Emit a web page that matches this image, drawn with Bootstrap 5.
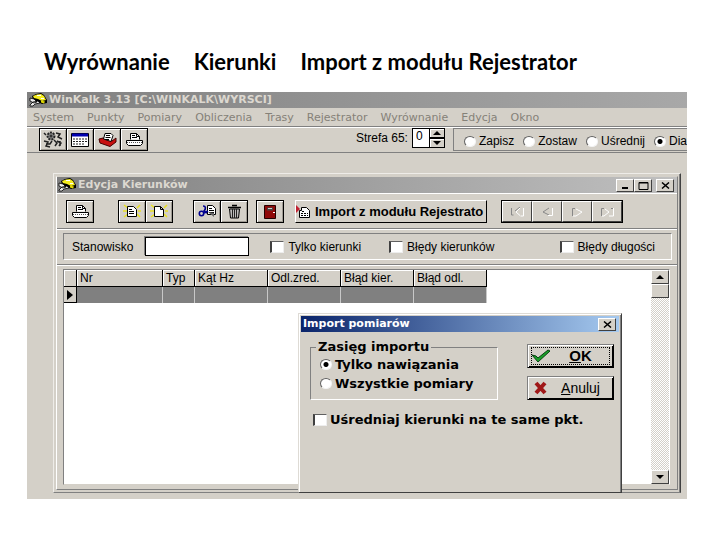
<!DOCTYPE html>
<html lang="pl">
<head>
<meta charset="utf-8">
<meta name="viewport" content="width=device-width, initial-scale=1">
<title>Wyrównanie – Kierunki – Import z modułu Rejestrator</title>
<link href="https://cdn.jsdelivr.net/npm/bootstrap@5.3.0/dist/css/bootstrap.min.css" rel="stylesheet">
<style>
:root { --face: #d4d0c8; --dark: #808080; --deep: #404040; }
body { background: #fff; color: #000; font: 11px/14px "DejaVu Sans", sans-serif; }
button, input { font: inherit; color: inherit; }
button { background: var(--face); border: 0; padding: 0; border-radius: 0; }
svg { display: block; flex: none; }
.slide-title { font: 700 22px/24px Lato, sans-serif; margin: 0; padding: 50px 0 18px 44px; gap: 24px; white-space: nowrap; }
.app { margin: 0 33px 20px 27px; background: var(--face); overflow: hidden; }
.bar { height: 16px; background: linear-gradient(90deg, #808080, #a8a8a8); color: #dcd8d0; font-weight: 700; line-height: 16px; white-space: nowrap; }
.bar-app { font-size: 11px; padding-left: 2px; gap: 2px; }
.menu { height: 19px; padding: 1px 6px 0; gap: 13px; border-bottom: 1px solid var(--dark); white-space: nowrap; }
.menu a { color: #858178; text-decoration: none; line-height: 17px; }
.tools { height: 26px; border-top: 1px solid #fff; border-bottom: 1px solid var(--dark); padding-left: 12px; white-space: nowrap; }
.tb { width: 28px; height: 23px; border: 1px solid #000; display: flex; align-items: center; justify-content: center; box-shadow: inset 1px 1px #fff, inset -1px -1px #a09c94; }
.tb + .tb { margin-left: -1px; }
.zone { font: 12px/16px "Liberation Sans", sans-serif; }
.zone input { width: 17px; height: 20px; padding: 0 0 5px 3px; border: 1px solid #000; border-right: 0; border-radius: 0; background: #fff; }
.spin { width: 16px; }
.spin button { height: 10px; display: flex; align-items: center; justify-content: center; border: 1px solid #000; box-shadow: inset 1px 1px #fff; }
.zone input[type=radio] { width: 12px; height: 11px; padding: 0; }
.modes { border: 1px solid var(--dark); border-right: 0; height: 23px; padding: 3px 0 0 10px; gap: 9px; }
.modes label, .opt { display: flex; align-items: center; gap: 4px; white-space: nowrap; }
.modes label { gap: 3px; }
input[type=radio], .zone input[type=radio] { appearance: none; flex: none; margin: 0; width: 12px; height: 11px; border-radius: 50%; background: #fff; border: 1px solid; border-color: #606060 #f4f4f4 #f4f4f4 #606060; }
input[type=radio]:checked, .zone input[type=radio]:checked { background: radial-gradient(circle, #000 2px, #fff 3px); }
input[type=checkbox], .zone input[type=checkbox] { appearance: none; flex: none; margin: 0; width: 14px; height: 12px; padding: 0; border-radius: 0; background: #fff; border: 1px solid; border-color: #606060 #eee #eee #404040; border-left-width: 2px; }
.desk { padding: 20px 6px 6px 26px; }
.mdi { border: 1px solid; border-color: #eeece8 var(--deep) var(--dark) #eeece8; padding: 2px; box-shadow: inset -1px 0 var(--dark); }
.mdi-in { border: 1px solid; border-color: var(--face) var(--dark) var(--dark) #fff; }
.bar-doc { background: linear-gradient(90deg, #808080, #c0c0c0); font-size: 11px; padding: 0 3px 0 1px; gap: 2px; }
.win { width: 18px; height: 13px; display: flex; align-items: center; justify-content: center; border: 1px solid; border-color: #fff var(--deep) var(--deep) #fff; }
.band { border-top: 1px solid #fff; border-bottom: 1px solid var(--dark); padding: 6px 0 5px 9px; white-space: nowrap; }
.import-btn { width: 192px; height: 23px; margin-left: 11px; border: 1px solid; border-color: #fff #000 #000 #fff; font: 700 13px/16px "Liberation Sans", sans-serif; white-space: nowrap; display: flex; align-items: center; gap: 4px; }
.nav-set { border: 1px solid #000; margin-left: 14px; }
.nav-set button { width: 30px; height: 21px; border: 1px solid; border-color: #fff #404040 #404040 #fff; display: flex; align-items: center; justify-content: center; }
.filter-wrap { border-top: 1px solid #fff; border-bottom: 1px solid var(--dark); padding: 3px 5px 4px 6px; }
.filter { height: 27px; border: 1px solid; border-color: var(--dark) #fff #fff var(--dark); padding: 0 16px 0 8px; white-space: nowrap; }
.filter input[type=text] { width: 104px; height: 19px; border: 1px solid #000; border-radius: 0; background: #fff; padding: 0 3px; box-shadow: -1px -1px var(--dark); margin-left: 12px; }
.filter .opt { gap: 4px; }
.opt-first { margin-left: 21px; } .opt-second { margin-left: 28px; }
.grid-wrap { border-top: 1px solid #fff; padding: 3px 7px 4px 6px; }
.grid { border: 1px solid; border-color: var(--dark) #fff var(--face) var(--dark); background: #fff; height: 216px; }
.grid table { border-collapse: separate; border-spacing: 0; table-layout: fixed; width: 423px; }
.grid th { font-weight: 400; background: var(--face); height: 17px; line-height: 15px; padding: 1px 0 0 3px; border-right: 1px solid #000; border-bottom: 1px solid #000; box-shadow: inset 1px 1px #fff; white-space: nowrap; }
.grid td { background: #808080; height: 16px; padding: 0; border-right: 1px solid #c8c8c8; }
.grid td:first-child { background: var(--face); border-right-color: #000; border-bottom: 1px solid #000; padding-left: 3px; }
.c-mark { width: 13px; } .c-nr { width: 86px; } .c-typ { width: 32px; }
.scroll { width: 18px; background: repeating-conic-gradient(#fff 0 25%, #d4d0c8 0 50%) 0 0 / 2px 2px; }
.scroll button, .thumb { height: 14px; background: var(--face); border: 1px solid; border-color: #fff var(--deep) var(--deep) #fff; display: flex; align-items: center; justify-content: center; }
.dialog { position: absolute; right: 65px; bottom: 6px; width: 324px; height: 180px; background: var(--face); border: 1px solid; border-color: #dedbd5 var(--deep) var(--deep) #dedbd5; padding: 2px; box-shadow: inset 1px 1px #fff, inset -1px 0 var(--dark); }
.bar-dlg { background: linear-gradient(90deg, #0a246a, #a6caf0); color: #fff; font-size: 11px; padding: 0 3px 0 2px; }
.dlg-body { padding: 12px 5px 0 9px; font-weight: 700; font-size: 13px; }
.dlg-body fieldset { width: 188px; height: 60px; border: 1px solid #fff; border-color: var(--dark) #fff #fff var(--dark); margin-top: -4px; padding: 0 0 0 9px; }
.dlg-body legend { float: none; width: auto; font: inherit; line-height: 14px; margin: 0 0 1px -4px; padding: 0 2px; background: var(--face); }
.dlg-body .opt { gap: 3px; height: 19px; }
.average { margin: 10px 0 0 3px; }
.dlg-btn { width: 87px; height: 24px; border: 1px solid; border-color: var(--dark) #000 #000 var(--dark); box-shadow: inset 1px 1px #fff, inset -1px -1px #000; position: relative; display: flex; align-items: center; padding: 0 3px; }
.dlg-btn.focus-dots::after { content: ""; position: absolute; inset: 2px 3px; border: 1px dotted #000; }
.ok-text { font: 700 15px/18px "Liberation Sans", sans-serif; }
.mid-text { font: 14px/16px "Liberation Sans", sans-serif; }
</style>
<script src="https://cdn.jsdelivr.net/npm/bootstrap@5.3.0/dist/js/bootstrap.bundle.min.js"></script>
</head>
<body>
<svg width="0" height="0" class="position-absolute" aria-hidden="true">
<defs>
<symbol id="helmet" viewBox="0 0 18 14"><path d="M3 3 7 1l5-1 3 2 3 5v3l-5 1-9-4z" fill="#000"/><path d="M4 3 8 1.500l4-.5 3 2 2 4-4 1-4-2-4-1z" fill="#f4ec20"/><path d="M8 2.500h4M12 5.500h3" stroke="#fff" stroke-width="1"/><path d="M12 7.500l4 1-1 2-3-1z" fill="#e0d800"/><path d="M1 5l4 1 3 3-3 1-4-2zM1 12l3-3 5-1 2 2-5 1-2 2H1z" fill="#eee" stroke="#000" stroke-width=".8"/></symbol>
<symbol id="printer" viewBox="0 0 19 15"><path d="M5.500 7.500V1.500h6l3 3v3" fill="#fff" stroke="#000"/><path d="M11.500 1.500v3h3M7 3.500h3M7 5.500h5" stroke="#000" fill="none"/><path d="M1.500 8.500h16v3l-2 2h-12l-2-2z" fill="#fff" stroke="#000"/><path d="M2 10.500h15" stroke="#555" stroke-dasharray="1 1"/></symbol>
</defs>
</svg>
<h1 class="slide-title d-flex"><span>Wyrównanie</span><span>Kierunki</span><span>Import z modułu Rejestrator</span></h1>
<main class="app">
  <div class="bar bar-app d-flex align-items-center"><svg width="18" height="14"><use href="#helmet"/></svg><span>WinKalk 3.13 [C:\WINKALK\WYRSCI]</span></div>
  <nav class="menu d-flex"><a href="#">System</a><a href="#">Punkty</a><a href="#">Pomiary</a><a href="#">Obliczenia</a><a href="#">Trasy</a><a href="#">Rejestrator</a><a href="#">Wyrównanie</a><a href="#">Edycja</a><a href="#">Okno</a></nav>
  <div class="tools d-flex align-items-start">
    <button class="tb" aria-label="Ustawienia"><svg width="20" height="17" viewBox="0 0 20 17"><circle cx="8" cy="5" r="3.500" fill="#888" stroke="#222" stroke-width="2" stroke-dasharray="2 1"/><circle cx="8" cy="5" r="1.500" fill="#333"/><path d="M1 2l2 2M1 10l4 1-2 4 4 1M3 13h4l2-3M11 9l3 3-2 3M13 2l4 1-2 3 4 2M14 10l4 2-2 3M17 10v5" fill="none" stroke="#222" stroke-width="1.500"/></svg></button>
    <button class="tb" aria-label="Tabela"><svg width="18" height="14" viewBox="0 0 18 14"><path d="M.5.500h17v13H.5z" fill="#fff" stroke="#000"/><path d="M1 2h16" stroke="#0000b0" stroke-width="3"/><path d="M2 6h14M2 8.500h14M2 11h11" stroke="#222" stroke-dasharray="2 1"/></svg></button>
    <button class="tb" aria-label="Raport"><svg width="19" height="15" viewBox="0 0 19 15"><path d="M1 7l4-1 9 3 4-3v4l-6 4.500L2 11z" fill="#c81010" stroke="#400"/><path d="M5.500 7 7 1.500h6l2 2-2 6z" fill="#fff" stroke="#000"/><path d="M8 3.500h4M7.500 5.500h5M7 7.500h4" stroke="#000"/></svg></button>
    <button class="tb" aria-label="Drukuj"><svg width="19" height="15"><use href="#printer"/></svg></button>
    <div class="zone d-flex align-items-center ms-auto"><label for="zone" class="me-1">Strefa 65:</label><input id="zone" type="text" value="0"><div class="spin"><button class="w-100" aria-label="Więcej"><svg width="8" height="4"><path d="M0 4 4 0l4 4z"/></svg></button><button class="w-100" aria-label="Mniej"><svg width="8" height="4"><path d="M0 0h8L4 4z"/></svg></button></div></div>
    <div class="modes zone d-flex ms-2">
      <label><input type="radio" name="mode">Zapisz</label><label><input type="radio" name="mode">Zostaw</label><label><input type="radio" name="mode">Uśrednij</label><label><input type="radio" name="mode" checked>Dia</label>
    </div>
  </div>
  <div class="desk position-relative">
    <section class="mdi"><div class="mdi-in">
      <div class="bar bar-doc d-flex align-items-center"><svg width="18" height="14"><use href="#helmet"/></svg><span class="me-auto">Edycja Kierunków</span>
        <div class="d-flex text-black"><button class="win" aria-label="Minimalizuj"><svg width="9" height="8"><path d="M1 6h6v2H1z"/></svg></button><button class="win me-1" aria-label="Maksymalizuj"><svg width="11" height="9"><path d="M1 1.500h9v7H1zM1 2h9" fill="none" stroke="#000"/></svg></button><button class="win" aria-label="Zamknij"><svg width="9" height="7"><path d="M1 .5l7 6M8 .5l-7 6" stroke="#000" stroke-width="1.500"/></svg></button></div>
      </div>
      <div class="band d-flex">
        <button class="tb" aria-label="Drukuj"><svg width="19" height="15"><use href="#printer"/></svg></button>
        <div class="d-flex ms-4"><button class="tb" aria-label="Wstaw"><svg width="18" height="15" viewBox="0 0 18 15"><path d="M1 1l4 3M0 7h4M1 13l4-3M17 1l-3 3M18 7h-3M17 13l-3-3" stroke="#e8e020" stroke-width="1.500"/><path d="M4.500 2.500h6l3 3v7h-9z" fill="#fff" stroke="#000"/><path d="M6 5.500h3M6 7.500h5M6 9.500h5" stroke="#000"/></svg></button><button class="tb" aria-label="Nowy"><svg width="18" height="15" viewBox="0 0 18 15"><path d="M1 1l4 3M0 7h4M1 13l4-3M17 1l-3 3M18 7h-3M17 13l-3-3" stroke="#e8e020" stroke-width="1.500"/><path d="M4.500 2.500h6l3 3v7h-9zM10.500 2.500v3h3" fill="#fff" stroke="#000"/></svg></button></div>
        <div class="d-flex ms-3 ps-1"><button class="tb" aria-label="Wytnij"><svg width="19" height="15" viewBox="0 0 19 15"><path d="M9.500 1.500h5l3 3v6h-8z" fill="#fff" stroke="#000"/><path d="M11 4.500h3M11 6.500h5M11 8.500h5" stroke="#000"/><path d="M10 8l6 5V9z" fill="#666"/><circle cx="3.500" cy="9.500" r="2.200" fill="none" stroke="#000090" stroke-width="1.600"/><path d="M5 2c3 0 3 3 1 5l3 2M6 9l4-2" fill="none" stroke="#000090" stroke-width="1.600"/></svg></button><button class="tb" aria-label="Usuń"><svg width="15" height="15" viewBox="0 0 15 15"><path d="M1 3.500h13M5 1.500h5" stroke="#000" stroke-width="1.500"/><path d="M2.500 5h10l-1 9h-8z" fill="#bbb" stroke="#000"/><path d="M5.500 5v9M7.500 5v9M9.500 5v9" stroke="#222"/></svg></button></div>
        <button class="tb ms-2" aria-label="Zamknij edycję"><svg width="12" height="14"><path d="M.5.500h11v13H.5z" fill="#900808" stroke="#200"/><path d="M3 2.500h6v3H3z" fill="#444"/><path d="M4 3.500h4" stroke="#ccc"/><path d="M9 7.500h2" stroke="#fff"/></svg></button>
        <button class="import-btn"><svg width="15" height="14" viewBox="0 0 15 14"><path d="M0 0l4 4-4 4z" fill="#c02030"/><path d="M3.500 5.500h2v-3h5l3 3v7h-10z" fill="#fff" stroke="#000"/><path d="M6 6.500h3M5 8.500h7M5 10.500h7" stroke="#000" stroke-dasharray="2 1"/></svg><span>Import z modułu Rejestrato</span></button>
        <div class="nav-set d-flex"><button aria-label="Pierwszy"><svg width="15" height="10" fill="none" stroke="#fff"><path d="M1.500 1v7h2M10 0 5 4" stroke="#888"/><path d="M10 1 6 5l4 3.500M13.500 1v8h-3"/></svg></button><button aria-label="Poprzedni"><svg width="13" height="10" fill="none"><path d="M8 1 2 5l6 3" stroke="#888"/><path d="M7 8.500h4.500V1" stroke="#fff"/></svg></button><button aria-label="Następny"><svg width="13" height="10" fill="none"><path d="M1.500 9V1.500H4" stroke="#888"/><path d="M5 2l6 3-6 4H2" stroke="#fff"/></svg></button><button aria-label="Ostatni"><svg width="15" height="10" fill="none"><path d="M1.500 9V1.500H4M11 1.500h2" stroke="#888"/><path d="M5 2l4 3-5 4H2M9 9h4.500V1" stroke="#fff"/></svg></button></div>
      </div>
      <div class="filter-wrap"><div class="filter zone d-flex align-items-center">
        <label for="station">Stanowisko</label><input id="station" type="text">
        <label class="opt opt-first"><input type="checkbox">Tylko kierunki</label>
        <label class="opt opt-second"><input type="checkbox">Błędy kierunków</label>
        <label class="opt ms-auto"><input type="checkbox">Błędy długości</label>
      </div></div>
      <div class="grid-wrap"><div class="grid d-flex justify-content-between">
        <table class="zone align-self-start"><colgroup><col class="c-mark"><col class="c-nr"><col class="c-typ"><col><col><col><col></colgroup>
          <thead><tr><th></th><th>Nr</th><th>Typ</th><th>Kąt Hz</th><th>Odl.zred.</th><th>Błąd kier.</th><th>Błąd odl.</th></tr></thead>
          <tbody><tr><td><svg width="7" height="10"><path d="M0 0l6 5-6 5z"/></svg></td><td></td><td></td><td></td><td></td><td></td><td></td></tr></tbody>
        </table>
        <div class="scroll d-flex flex-column"><button aria-label="W górę"><svg width="8" height="4"><path d="M0 4 4 0l4 4z"/></svg></button><div class="thumb"></div><button class="mt-auto" aria-label="W dół"><svg width="8" height="4"><path d="M0 0h8L4 4z"/></svg></button></div>
      </div></div>
    </div></section>
  <section class="dialog" role="dialog" aria-labelledby="dlg">
    <div class="bar bar-dlg d-flex align-items-center justify-content-between"><span id="dlg">Import pomiarów</span><button class="win text-black" aria-label="Zamknij"><svg width="9" height="7"><path d="M1 .5l7 6M8 .5l-7 6" stroke="#000" stroke-width="1.500"/></svg></button></div>
    <div class="dlg-body">
      <div class="d-flex justify-content-between">
        <fieldset><legend>Zasięg importu</legend>
          <label class="opt"><input type="radio" name="range" checked>Tylko nawiązania</label>
          <label class="opt"><input type="radio" name="range">Wszystkie pomiary</label>
        </fieldset>
        <div class="d-flex flex-column gap-2"><button class="dlg-btn focus-dots"><svg width="20" height="14" viewBox="0 0 20 14"><path d="M1 6l4 1 2 2 10-8 2 1L7 13z" fill="#18a028" stroke="#064010"/></svg><span class="ok-text flex-fill"><u>O</u>K</span></button>
        <button class="dlg-btn"><svg width="20" height="14" viewBox="0 0 20 14"><path d="M5 2l9 10M14 2 5 12" stroke="#a01818" stroke-width="4"/></svg><span class="mid-text flex-fill"><u>A</u>nuluj</span></button></div>
      </div>
      <label class="opt average"><input type="checkbox">Uśredniaj kierunki na te same pkt.</label>
    </div>
  </section>
  </div>
</main>
</body>
</html>
